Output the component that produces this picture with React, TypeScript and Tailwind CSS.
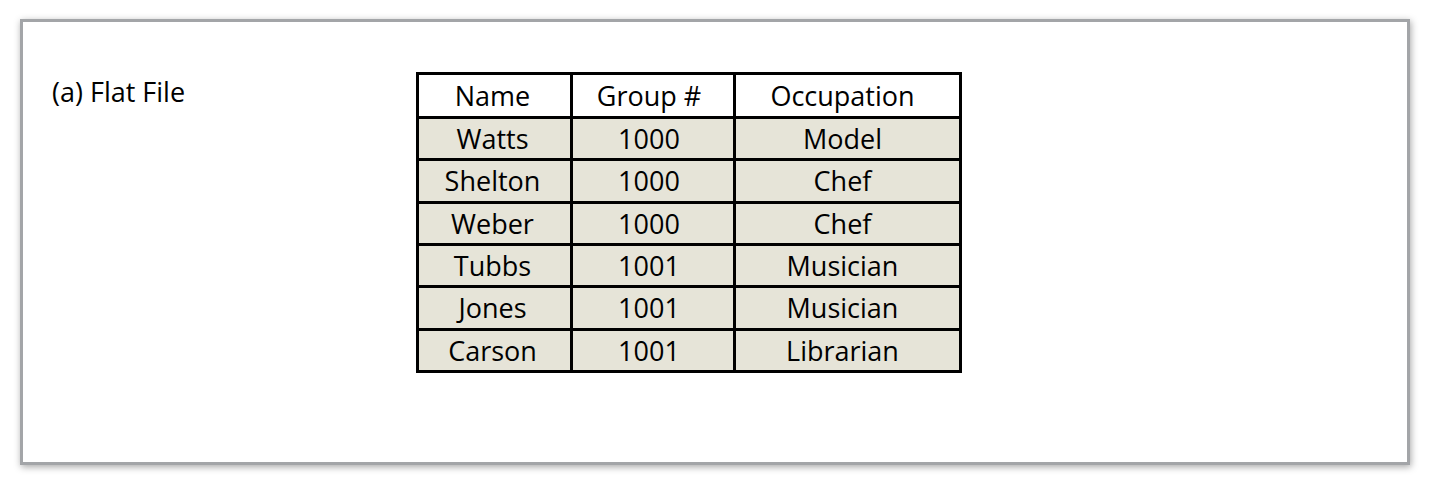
const rows = [
  ["Watts", "1000", "Model"],
  ["Shelton", "1000", "Chef"],
  ["Weber", "1000", "Chef"],
  ["Tubbs", "1001", "Musician"],
  ["Jones", "1001", "Musician"],
  ["Carson", "1001", "Librarian"],
];

export default function App() {
  return (
    <div
      className="h-[485px] w-[1430px] bg-white pt-[19px] pl-[20px]"
      style={{ fontFamily: '"Open Sans", "Noto Sans", sans-serif' }}
    >
      {/* framed figure panel */}
      <div className="flex h-[446px] w-[1390px] border-[3px] border-[#a3a5a8] bg-white pt-[50px] pl-[29px] shadow-[1px_2px_7px_rgba(0,0,0,0.35)]">
        <div className="w-[364px] text-[27px] leading-[40px] text-black">(a) Flat File</div>
        <table className="h-[301px] border-collapse border-[3px] border-black text-[27px] text-black">
          <thead>
            <tr className="h-[44px] bg-white">
              <th className="w-[154px] border-[3px] border-black pr-[4px] font-normal leading-none">Name</th>
              <th className="w-[163px] border-[3px] border-black pr-[8px] font-normal leading-none">Group #</th>
              <th className="w-[226px] border-[3px] border-black pr-[10px] font-normal leading-none">Occupation</th>
            </tr>
          </thead>
          <tbody>
            {rows.map((r) => (
              <tr key={r[0]} className="h-[42px] bg-[#e6e4d8]">
                <td className="border-[3px] border-black pr-[4px] text-center leading-none">{r[0]}</td>
                <td className="border-[3px] border-black pr-[8px] text-center leading-none">{r[1]}</td>
                <td className="border-[3px] border-black pr-[10px] text-center leading-none">{r[2]}</td>
              </tr>
            ))}
          </tbody>
        </table>
      </div>
    </div>
  );
}
